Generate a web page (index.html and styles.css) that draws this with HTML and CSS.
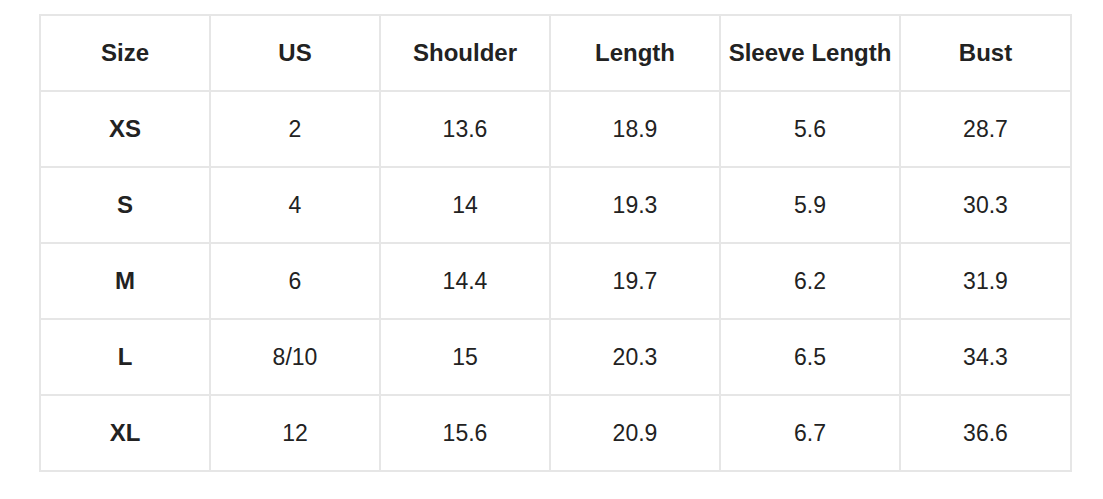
FILE: index.html
```html
<!DOCTYPE html>
<html>
<head>
<meta charset="utf-8">
<link rel="stylesheet" href="styles.css">
</head>
<body>
<div class="wrap">
  <div class="chart">
    <div class="cell head">Size</div>
    <div class="cell head">US</div>
    <div class="cell head">Shoulder</div>
    <div class="cell head">Length</div>
    <div class="cell head">Sleeve Length</div>
    <div class="cell head">Bust</div>

    <div class="cell head">XS</div>
    <div class="cell">2</div>
    <div class="cell">13.6</div>
    <div class="cell">18.9</div>
    <div class="cell">5.6</div>
    <div class="cell">28.7</div>

    <div class="cell head">S</div>
    <div class="cell">4</div>
    <div class="cell">14</div>
    <div class="cell">19.3</div>
    <div class="cell">5.9</div>
    <div class="cell">30.3</div>

    <div class="cell head">M</div>
    <div class="cell">6</div>
    <div class="cell">14.4</div>
    <div class="cell">19.7</div>
    <div class="cell">6.2</div>
    <div class="cell">31.9</div>

    <div class="cell head">L</div>
    <div class="cell">8/10</div>
    <div class="cell">15</div>
    <div class="cell">20.3</div>
    <div class="cell">6.5</div>
    <div class="cell">34.3</div>

    <div class="cell head">XL</div>
    <div class="cell">12</div>
    <div class="cell">15.6</div>
    <div class="cell">20.9</div>
    <div class="cell">6.7</div>
    <div class="cell">36.6</div>
  </div>
</div>
</body>
</html>
```
FILE: styles.css
```css
html, body {
  margin: 0;
  padding: 0;
  background: #ffffff;
}
.wrap {
  padding: 14px 0 0 39px;
}
.chart {
  display: inline-grid;
  grid-template-columns: 168px 168px 168px 168px 178px 169px;
  grid-auto-rows: 74px;
  gap: 2px;
  padding: 2px;
  background: #e6e6e6;
  font-family: "Liberation Sans", Arial, Helvetica, sans-serif;
  font-size: 23px;
  color: #222222;
}
.cell {
  background: #ffffff;
  display: flex;
  align-items: center;
  justify-content: center;
  white-space: nowrap;
}
.head {
  font-weight: bold;
  font-size: 24px;
}
```
